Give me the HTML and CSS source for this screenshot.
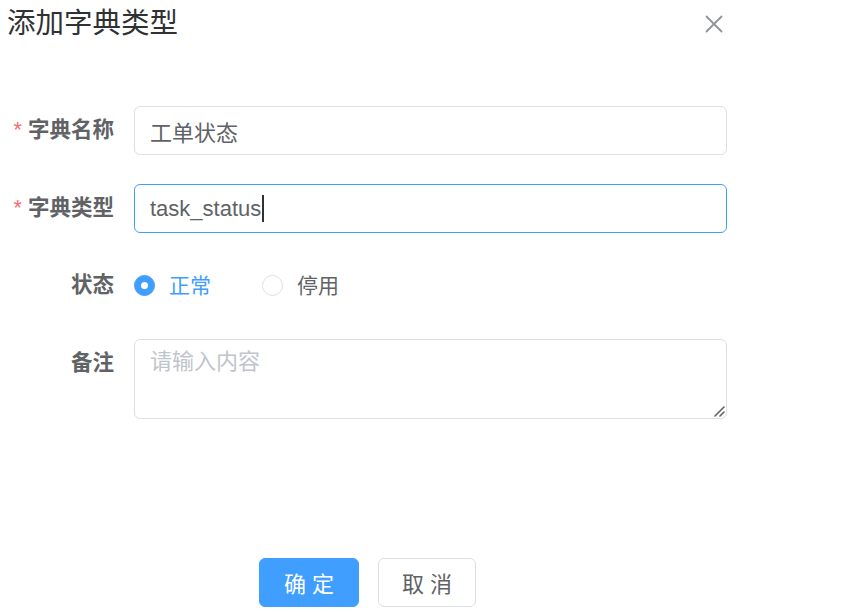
FILE: index.html
```html
<!DOCTYPE html>
<html lang="zh-CN">
<head>
<meta charset="utf-8">
<title>添加字典类型</title>
<link rel="stylesheet" href="styles.css">
</head>
<body>
<div class="dialog">
  <div class="header">
    <span class="title">添加字典类型</span>
    <button class="close" aria-label="关闭">
      <svg width="18" height="18" viewBox="0 0 18 18"><path d="M1.5 1.5 L16.5 16.5 M16.5 1.5 L1.5 16.5" stroke="#909399" stroke-width="1.8" stroke-linecap="round"/></svg>
    </button>
  </div>
  <form class="form">
    <div class="row">
      <label class="label required">字典名称</label>
      <input class="input" value="工单状态" readonly>
    </div>
    <div class="row">
      <label class="label required">字典类型</label>
      <div class="input focus">task_status<span class="caret"></span></div>
    </div>
    <div class="row">
      <label class="label">状态</label>
      <div class="radios">
        <span class="radio checked"><span class="dot"></span><span class="rtext">正常</span></span>
        <span class="radio"><span class="dot"></span><span class="rtext">停用</span></span>
      </div>
    </div>
    <div class="row">
      <label class="label">备注</label>
      <div class="tawrap">
        <textarea class="textarea" placeholder="请输入内容"></textarea>
        <svg class="resizer" width="12" height="12" viewBox="0 0 12 12"><path d="M11 2 L2 11 M11 7 L7 11" stroke="#606266" stroke-width="1.6" stroke-linecap="round"/></svg>
      </div>
    </div>
  </form>
  <div class="footer">
    <button class="btn primary">确定</button>
    <button class="btn">取消</button>
  </div>
</div>
</body>
</html>
```
FILE: styles.css
```css
html, body {
  margin: 0;
  padding: 0;
  background: #fff;
}
body {
  font-family: "Liberation Sans", "Noto Sans CJK SC", sans-serif;
  color: #606266;
}
.dialog {
  width: 735px;
}
.header {
  display: flex;
  justify-content: space-between;
  align-items: center;
  padding-top: 3px;
  height: 40px;
}
.title {
  margin-left: 7px;
  font-size: 28.5px;
  line-height: 40px;
  color: #303133;
}
.close {
  border: 0;
  background: none;
  padding: 0;
  margin-right: 12px;
  width: 18px;
  height: 18px;
  display: flex;
  margin-top: 1px;
}
.form {
  margin: 63px 8px 0 0;
}
.row {
  display: flex;
  align-items: flex-start;
  margin-bottom: 28.5px;
}
.label {
  width: 134px;
  box-sizing: border-box;
  padding-right: 20px;
  text-align: right;
  font-size: 21.5px;
  font-weight: 700;
  line-height: 49px;
  color: #606266;
  flex: none;
}
.required::before {
  content: "*";
  color: #f56c6c;
  margin-right: 6px;
  font-weight: 400;
}
.input {
  flex: 1;
  height: 49px;
  box-sizing: border-box;
  border: 1px solid #dcdfe6;
  border-radius: 6px;
  padding: 0 15px;
  font-family: inherit;
  font-size: 22px;
  color: #606266;
  line-height: 47px;
  outline: none;
  background: #fff;
  min-width: 0;
}
.input.focus {
  border-color: #409eff;
}
.caret {
  display: inline-block;
  width: 2px;
  height: 27px;
  background: #303133;
  vertical-align: middle;
  margin-left: 1px;
  margin-top: -3px;
}
.radios {
  display: flex;
  align-items: center;
  height: 49px;
}
.radio {
  display: flex;
  align-items: center;
  margin-right: 51px;
  font-size: 21px;
  color: #606266;
}
.dot {
  width: 21px;
  height: 21px;
  box-sizing: border-box;
  border: 1px solid #dcdfe6;
  border-radius: 50%;
  background: #fff;
  display: flex;
  align-items: center;
  justify-content: center;
}
.radio.checked .dot {
  border-color: #409eff;
  background: #409eff;
}
.radio.checked .dot::after {
  content: "";
  width: 7px;
  height: 7px;
  border-radius: 50%;
  background: #fff;
}
.rtext {
  margin-left: 14px;
  line-height: 49px;
}
.radio.checked .rtext {
  color: #409eff;
}
.tawrap {
  flex: 1;
  position: relative;
  display: flex;
}
.textarea {
  flex: 1;
  height: 80px;
  box-sizing: border-box;
  border: 1px solid #dcdfe6;
  border-radius: 6px;
  padding: 5px 15px;
  font-family: inherit;
  font-size: 22px;
  line-height: 33px;
  color: #606266;
  outline: none;
  resize: none;
  display: block;
  margin: 0;
}
.textarea::placeholder {
  color: #c0c4cc;
}
.resizer {
  position: absolute;
  right: 2px;
  bottom: 2px;
}
.footer {
  display: flex;
  justify-content: center;
  gap: 19px;
  margin-top: 139px;
}
.btn {
  width: 98px;
  height: 49px;
  box-sizing: border-box;
  border: 1px solid #dcdfe6;
  border-radius: 6px;
  background: #fff;
  color: #606266;
  font-family: inherit;
  font-size: 22px;
  letter-spacing: 6px;
  padding: 0 0 0 6px;
  text-align: center;
}
.btn.primary {
  background: #409eff;
  border-color: #409eff;
  color: #fff;
  width: 100px;
}
```
